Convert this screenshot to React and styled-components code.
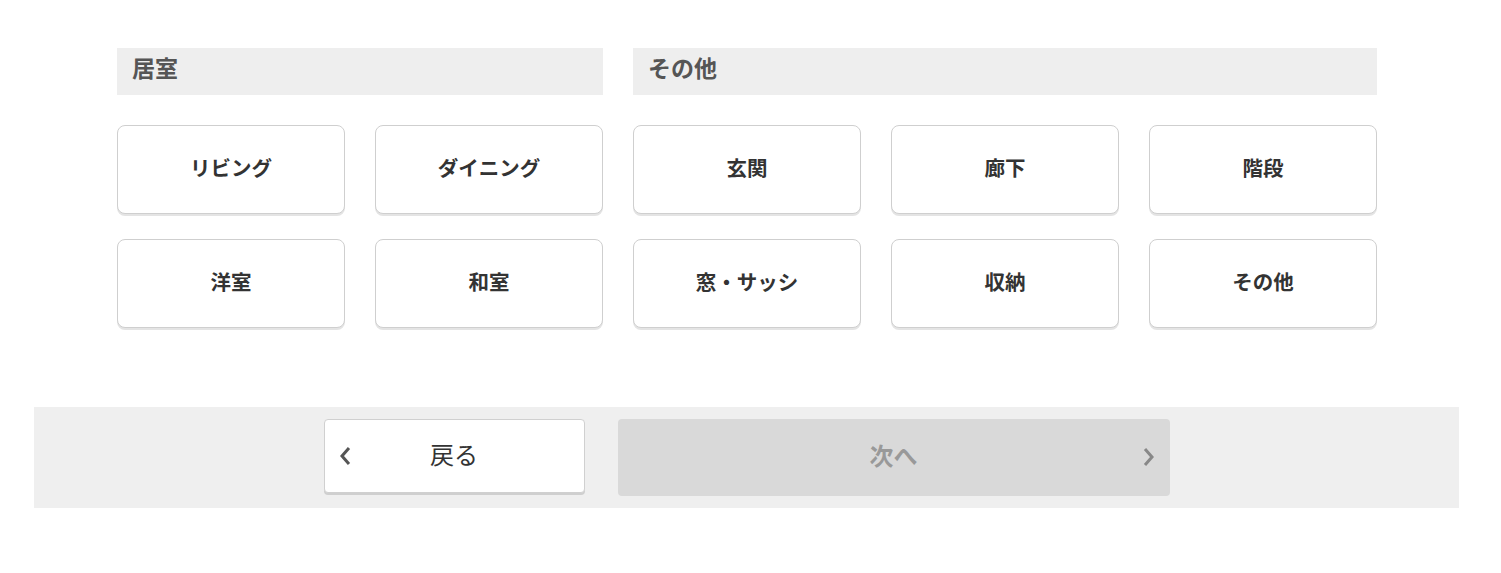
import React from "react";
import styled, { createGlobalStyle } from "styled-components";

const Global = createGlobalStyle`
  html, body { margin: 0; padding: 0; background: #fff; }
  body { font-family: "Noto Sans CJK JP", "Noto Sans", sans-serif; color: #333; }
`;

const Page = styled.div`
  width: 1501px;
  padding-top: 48px;
`;

const Sections = styled.div`
  display: flex;
  gap: 30px;
  margin-left: 117px;
`;

const Section = styled.section`
  width: ${(p) => p.$w}px;
`;

const Heading = styled.h2`
  margin: 0;
  height: 47px;
  background: #eeeeee;
  padding-left: 15px;
  padding-bottom: 8px;
  box-sizing: border-box;
  display: flex;
  align-items: center;
  font-size: 23px;
  line-height: 1;
  font-weight: 700;
  color: #555;
`;

const Grid = styled.div`
  display: grid;
  grid-template-columns: repeat(${(p) => p.$cols}, 228px);
  column-gap: 30px;
  row-gap: 25px;
  margin-top: 30px;
`;

const Choice = styled.button`
  height: 89px;
  box-sizing: border-box;
  background: #fff;
  border: 1px solid #cfcfcf;
  border-radius: 8px;
  box-shadow: 0 2px 0 #e4e4e4;
  font-family: inherit;
  font-size: 20.5px;
  line-height: 1;
  font-weight: 700;
  color: #333;
  cursor: pointer;
  padding: 0 0 4px;
`;

const Footer = styled.div`
  margin: 79px 0 0 34px;
  width: 1425px;
  height: 101px;
  background: #efefef;
  display: flex;
  justify-content: center;
  align-items: flex-start;
  gap: 33px;
  padding-top: 12px;
  box-sizing: border-box;
`;

const NavButton = styled.button`
  position: relative;
  box-sizing: border-box;
  width: ${(p) => p.$w}px;
  height: ${(p) => (p.$disabled ? 77 : 74)}px;
  border-radius: 4px;
  border: ${(p) => (p.$disabled ? "none" : "1px solid #d0d0d0")};
  background: ${(p) => (p.$disabled ? "#d9d9d9" : "#fff")};
  box-shadow: ${(p) => (p.$disabled ? "none" : "0 2px 0 #cfcfcf")};
  font-family: inherit;
  font-size: 24px;
  line-height: 1;
  font-weight: ${(p) => (p.$disabled ? 700 : 400)};
  color: ${(p) => (p.$disabled ? "#999" : "#333")};
  display: flex;
  align-items: center;
  justify-content: center;
  padding: 0 0 ${(p) => (p.$disabled ? 6 : 5)}px;
`;

const Chevron = styled.svg`
  position: absolute;
  top: 50%;
  margin-top: ${(p) => (p.$side === "left" ? -11 : -12)}px;
  ${(p) => (p.$side === "left" ? "left: 12px;" : "right: 13px;")}
`;

const Arrow = ({ side, color }) => (
  <Chevron $side={side} width="16" height="22" viewBox="0 0 16 22">
    <path
      d={side === "left" ? "M12 3 L5 11 L12 19" : "M4 3 L11 11 L4 19"}
      fill="none"
      stroke={color}
      strokeWidth="3"
    />
  </Chevron>
);

const living = ["リビング", "ダイニング", "洋室", "和室"];
const others = ["玄関", "廊下", "階段", "窓・サッシ", "収納", "その他"];

export default function App() {
  return (
    <Page>
      <Global />
      <Sections>
        <Section $w={486}>
          <Heading>居室</Heading>
          <Grid $cols={2}>
            {living.map((t) => (
              <Choice key={t}>{t}</Choice>
            ))}
          </Grid>
        </Section>
        <Section $w={744}>
          <Heading>その他</Heading>
          <Grid $cols={3}>
            {others.map((t) => (
              <Choice key={t}>{t}</Choice>
            ))}
          </Grid>
        </Section>
      </Sections>
      <Footer>
        <NavButton $w={261}>
          <Arrow side="left" color="#555" />
          戻る
        </NavButton>
        <NavButton $w={552} $disabled>
          次へ
          <Arrow side="right" color="#888" />
        </NavButton>
      </Footer>
    </Page>
  );
}
